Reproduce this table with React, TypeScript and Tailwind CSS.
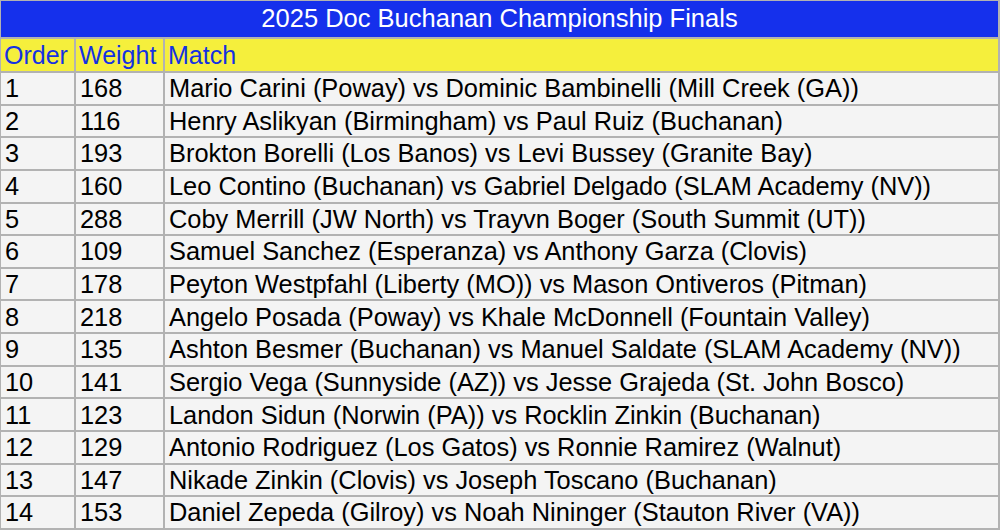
import React from "react";

const rows: [number, number, string][] = [
  [1, 168, "Mario Carini (Poway) vs Dominic Bambinelli (Mill Creek (GA))"],
  [2, 116, "Henry Aslikyan (Birmingham) vs Paul Ruiz (Buchanan)"],
  [3, 193, "Brokton Borelli (Los Banos) vs Levi Bussey (Granite Bay)"],
  [4, 160, "Leo Contino (Buchanan) vs Gabriel Delgado (SLAM Academy (NV))"],
  [5, 288, "Coby Merrill (JW North) vs Trayvn Boger (South Summit (UT))"],
  [6, 109, "Samuel Sanchez (Esperanza) vs Anthony Garza (Clovis)"],
  [7, 178, "Peyton Westpfahl (Liberty (MO)) vs Mason Ontiveros (Pitman)"],
  [8, 218, "Angelo Posada (Poway) vs Khale McDonnell (Fountain Valley)"],
  [9, 135, "Ashton Besmer (Buchanan) vs Manuel Saldate (SLAM Academy (NV))"],
  [10, 141, "Sergio Vega (Sunnyside (AZ)) vs Jesse Grajeda (St. John Bosco)"],
  [11, 123, "Landon Sidun (Norwin (PA)) vs Rocklin Zinkin (Buchanan)"],
  [12, 129, "Antonio Rodriguez (Los Gatos) vs Ronnie Ramirez (Walnut)"],
  [13, 147, "Nikade Zinkin (Clovis) vs Joseph Toscano (Buchanan)"],
  [14, 153, "Daniel Zepeda (Gilroy) vs Noah Nininger (Stauton River (VA))"],
];

const cell = "bg-[#f4f4f4] flex items-center pl-[4px] pt-[1px] text-[25.4px] text-black whitespace-nowrap";
const head = "bg-[#f5ef3c] flex items-center pl-[3px] text-[25px] text-[#1432e2] whitespace-nowrap";

export default function App() {
  return (
    <div className="w-[1000px] h-[530px] bg-[#b2b2b2] pt-px pl-px pr-[2px] pb-[2px] flex flex-col gap-[2px] font-['Liberation_Sans',Arial,sans-serif] leading-none">
      <div className="h-[36px] shrink-0 bg-[#1530ec] flex items-center justify-center text-white text-[25.5px]">
        2025 Doc Buchanan Championship Finals
      </div>
      <div className="h-[32px] shrink-0 grid grid-cols-[73px_87px_1fr] gap-[2px]">
        <div className={head}>Order</div>
        <div className={head}>Weight</div>
        <div className={head}>Match</div>
      </div>
      {rows.map(([order, weight, match]) => (
        <div key={order} className="flex-1 grid grid-cols-[73px_87px_1fr] gap-[2px]">
          <div className={cell}>{order}</div>
          <div className={cell}>{weight}</div>
          <div className={cell}>{match}</div>
        </div>
      ))}
    </div>
  );
}
